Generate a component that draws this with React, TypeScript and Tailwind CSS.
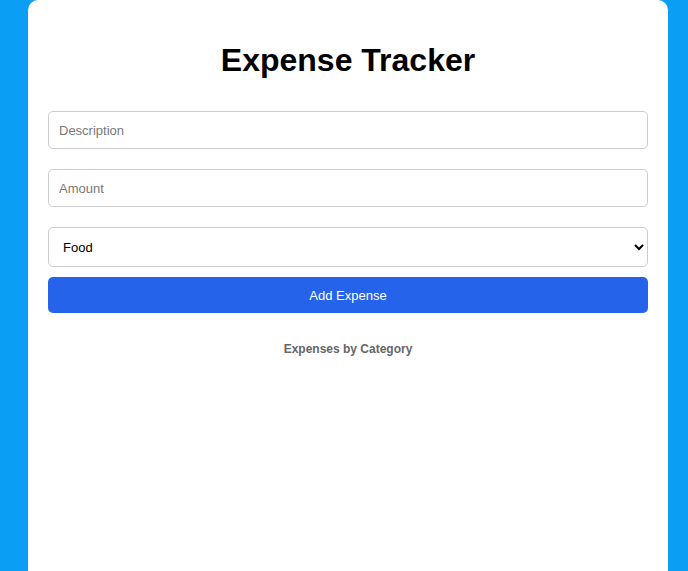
export default function App() {
  return (
    <div className="h-[571px] bg-[#0a9ff5] overflow-hidden flex" style={{ fontFamily: '"Liberation Sans", Arial, sans-serif' }}>
      <div className="ml-[28px] w-[640px] h-full bg-white rounded-t-[10px] px-[20px] pt-[42px]">
        <h1 className="text-[32px] leading-[37px] font-bold text-center text-black">Expense Tracker</h1>
        <div className="mt-[32px] flex flex-col">
          <input
            type="text"
            placeholder="Description"
            className="h-[38px] w-full border border-[#ccc] rounded-[5px] px-[10px] text-[13px] placeholder:text-[#777] outline-none"
          />
          <input
            type="number"
            placeholder="Amount"
            className="mt-[20px] h-[38px] w-full border border-[#ccc] rounded-[5px] px-[10px] text-[13px] placeholder:text-[#777] outline-none"
          />
          <select className="mt-[20px] h-[40px] w-full border border-[#ccc] rounded-[5px] px-[10px] text-[13px] text-black bg-white outline-none">
            <option>Food</option>
            <option>Transport</option>
            <option>Entertainment</option>
            <option>Other</option>
          </select>
          <button className="mt-[10px] h-[36px] w-full bg-[#2563eb] text-white text-[13px] leading-[34px] rounded-[5px] pt-[1px]">
            Add Expense
          </button>
        </div>
        <div className="mt-[27px]">
          <h3 className="text-center text-[12px] font-bold text-[#666]">Expenses by Category</h3>
        </div>
      </div>
    </div>
  );
}
